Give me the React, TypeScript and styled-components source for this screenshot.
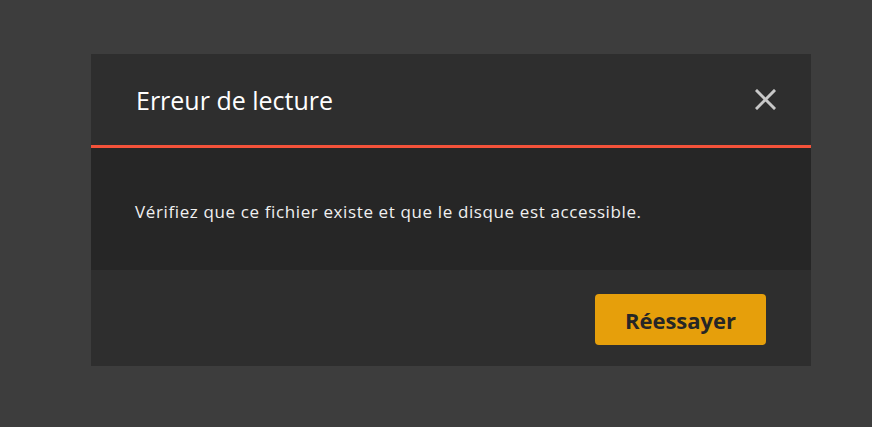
import React from "react";
import styled, { createGlobalStyle } from "styled-components";

const Global = createGlobalStyle`
  html, body { margin: 0; padding: 0; background: #3d3d3d; height: 100%; }
  body { font-family: "Open Sans", "Noto Sans", sans-serif; }
  #root { padding: 54px 0 0 91px; }
`;

const Dialog = styled.div`
  width: 720px;
  background: #2e2e2e;
  display: flex;
  flex-direction: column;
`;

const Header = styled.div`
  height: 91px;
  display: flex;
  align-items: center;
  justify-content: space-between;
  padding: 0 35px 0 45px;
  border-bottom: 3px solid #f4523a;
`;

const Title = styled.h1`
  margin: 0;
  font-size: 25px;
  font-weight: 400;
  color: #ffffff;
`;

const CloseButton = styled.button`
  background: none;
  border: none;
  padding: 0;
  width: 21px;
  height: 21px;
  display: flex;
  align-items: center;
  justify-content: center;
  cursor: pointer;
`;

const Body = styled.div`
  height: 122px;
  background: #262626;
  display: flex;
  align-items: center;
  padding: 4px 44px 0;
  box-sizing: border-box;
`;

const Message = styled.p`
  margin: 0;
  font-size: 17px;
  letter-spacing: 0.62px;
  color: #f0f0f0;
`;

const Footer = styled.div`
  height: 96px;
  display: flex;
  justify-content: flex-end;
  align-items: flex-start;
  padding: 24px 45px 0;
  box-sizing: border-box;
`;

const Primary = styled.button`
  width: 171px;
  height: 51px;
  border: none;
  border-radius: 4px;
  background: #e69f0b;
  color: #262626;
  font-family: "Open Sans", "Noto Sans", sans-serif;
  font-size: 22px;
  font-weight: 700;
  cursor: pointer;
`;

export default function App() {
  return (
    <>
      <Global />
      <Dialog>
        <Header>
          <Title>Erreur de lecture</Title>
          <CloseButton aria-label="Fermer">
            <svg width="21" height="21" viewBox="0 0 21 21">
              <path d="M2 2 L19 19 M19 2 L2 19" stroke="#c8c8c8" strokeWidth="3" strokeLinecap="square" />
            </svg>
          </CloseButton>
        </Header>
        <Body>
          <Message>Vérifiez que ce fichier existe et que le disque est accessible.</Message>
        </Body>
        <Footer>
          <Primary>Réessayer</Primary>
        </Footer>
      </Dialog>
    </>
  );
}
